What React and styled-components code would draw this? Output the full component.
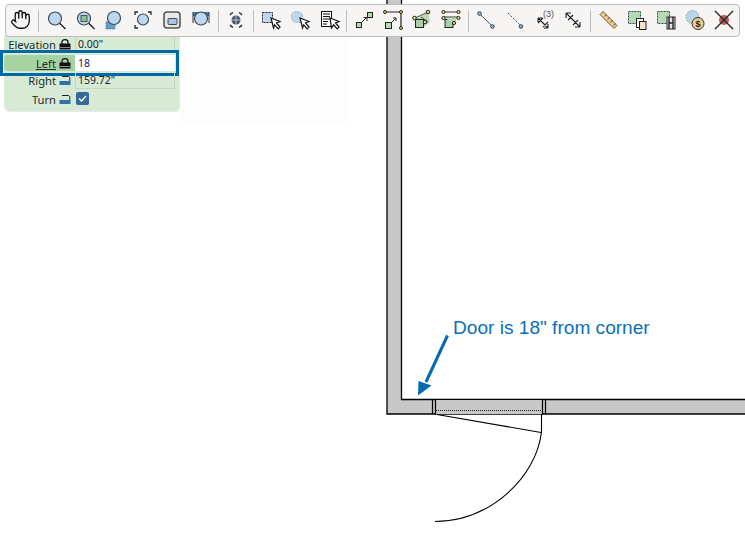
import React from 'react';
import styled, { createGlobalStyle } from 'styled-components';
import { Hand } from 'lucide-react';

const GlobalStyle = createGlobalStyle`
  html, body { margin: 0; padding: 0; background: #fff; }
  body { font-family: "Noto Sans", "Open Sans", sans-serif; }
`;

const Page = styled.div`
  position: relative;
  width: 745px;
  height: 555px;
  overflow: hidden;
  background: #fff;
`;

const Drawing = styled.svg`
  position: absolute;
  left: 0;
  top: 0;
`;

const Callout = styled.div`
  position: absolute;
  left: 453px;
  top: 317px;
  font-family: "Liberation Sans", Arial, sans-serif;
  font-size: 19.1px;
  line-height: 21px;
  color: #0b6fb8;
  white-space: nowrap;
`;

const Toolbar = styled.div`
  position: relative;
  z-index: 2;
  display: flex;
  align-items: center;
  box-sizing: border-box;
  width: 735px;
  height: 33px;
  margin: 4px 0 0 5px;
  background: #f6f5f3;
  border: 1px solid #bdbdbd;
  border-radius: 4px;
`;

const ToolButton = styled.div`
  flex: 0 0 29px;
  height: 29px;
  display: flex;
  align-items: center;
  justify-content: center;
  transform: translateY(-1px);
`;

const Separator = styled.div`
  flex: 0 0 6px;
  height: 22px;
  display: flex;
  justify-content: center;

  &::before {
    content: '';
    width: 1px;
    background: #bcbcbc;
  }
`;

const Panel = styled.div`
  position: relative;
  box-sizing: border-box;
  width: 175px;
  height: 76px;
  margin: -2px 0 0 4px;
  padding-right: 5px;
  background: #d6ead6;
  border-radius: 0 0 5px 5px;
  box-shadow: 1px 1px 1px #e4ece4;
`;

const Row = styled.div`
  position: relative;
  display: grid;
  grid-template-columns: 71px 100px;
  height: ${props => props.$height || 18}px;
`;

const LabelCell = styled.div`
  display: flex;
  align-items: center;
  justify-content: flex-end;
  gap: 3px;
  box-sizing: border-box;
  padding-right: 4px;
  font-size: 11.2px;
  color: #1f2a2a;
  background: ${props => (props.$active ? '#a6d3a1' : 'transparent')};
  border-radius: ${props => (props.$active ? '4px 0 0 4px' : '0')};
  margin-top: ${props => (props.$active ? '2px' : '0')};
  text-decoration: ${props => (props.$active ? 'underline' : 'none')};
`;

const ValueCell = styled.div`
  display: flex;
  align-items: center;
  box-sizing: border-box;
  padding-left: ${props => (props.$flush ? '0' : '2px')};
  font-size: 10.5px;
  color: #223;
  border: ${props => (props.$flush ? '0' : '1px')} solid ${props => (props.$plain ? 'transparent' : '#c2dac2')};
  border-top: none;
`;

const LeftInput = styled.input`
  box-sizing: border-box;
  width: 100%;
  height: 16px;
  margin-top: 2px;
  padding: 0 0 0 3px;
  border: none;
  outline: none;
  background: #fff;
  font-family: inherit;
  font-size: 10.5px;
  color: #1a1a50;
`;

const Highlight = styled.div`
  position: absolute;
  left: -4px;
  right: -5px;
  top: -3px;
  height: 26px;
  box-sizing: border-box;
  border: 3px solid #0068a6;
  pointer-events: none;
`;

const Check = styled.div`
  width: 13px;
  height: 13px;
  margin-left: -2px;
  border-radius: 2px;
  background: #37699a;
  display: flex;
  align-items: center;
  justify-content: center;
`;

const Ico = ({ children }) => (
  <svg width="24" height="24" viewBox="0 0 24 24" fill="none">{children}</svg>
);

const Lens = ({ x = 11, y = 10.5, r = 6.5 }) => (
  <>
    <circle cx={x} cy={y} r={r} fill="#bdd8ee" stroke="#3b4a55" strokeWidth="1.2" />
    <path d={`M${x + r * 0.72} ${y + r * 0.72}L${x + r + 4} ${y + r + 4}`} stroke="#222" strokeWidth="1.4" />
  </>
);

const Cursor = ({ x = 0 }) => (
  <path
    d={`M${12 + x} 10l9 3.500-3.500 1.500 3.500 4-1.800 1.800-3.500-4L14.500 20z`}
    fill="#fff"
    stroke="#111"
    strokeWidth="1.200"
  />
);

const Lock = ({ open }) => (
  <svg width="12" height="11" viewBox="0 0 12 11" fill="none">
    {open ? (
      <>
        <path d="M3 1.500H9C10.300 1.500 10.800 2.200 10.800 3.200V6" stroke="#222" strokeWidth="1" />
        <rect x="0.500" y="6" width="11" height="4" fill="#2f71a8" />
      </>
    ) : (
      <>
        <path d="M3 5V3C3 1.400 4.200 .7 6 .7S9 1.400 9 3V5" stroke="#111" strokeWidth="1.300" />
        <rect x="0.500" y="4.500" width="11" height="6" fill="#111" />
        <rect x="0.500" y="8" width="11" height="1" fill="#888" />
      </>
    )}
  </svg>
);

const icons = [
  <Hand key="hand" size={21} strokeWidth={1.5} color="#111" />,
  '|',
  <Ico key="z1"><Lens /></Ico>,
  <Ico key="z2"><Lens /><rect x="8" y="7.500" width="6" height="6" fill="#8cbf8e" stroke="#456" strokeWidth="1" /></Ico>,
  <Ico key="z3"><path d="M4 14h9v7H4z" fill="#6f9cc4" stroke="#4c7da8" strokeDasharray="1.5 1" /><Lens x="12" y="10" /></Ico>,
  <Ico key="z4"><path d="M4 7V4h3M17 4h3v3M4 17v3h3" stroke="#222" strokeWidth="1.3" /><Lens x="12" y="11.500" r="5.500" /></Ico>,
  <Ico key="z5"><rect x="4" y="4" width="16" height="16" rx="3" fill="#e8e8e8" stroke="#555" strokeWidth="1.6" /><rect x="8" y="10.500" width="9" height="6" rx="1" fill="#a5c6e2" stroke="#445" /></Ico>,
  <Ico key="z6"><path d="M4 4h16v4H4z" fill="#3f78a8" /><path d="M4 4v11M20 4v11" stroke="#333" /><Lens x="12" y="10.500" r="6.500" /></Ico>,
  '|',
  <Ico key="target">
    <circle cx="12" cy="12" r="4.500" fill="#44586a" />
    <path d="M12 6v12M6 12h12" stroke="#cfe0ee" strokeWidth="0.8" />
    <path d="M6 7c1-1.400 2-2 3-2.400M18 7c-1-1.400-2-2-3-2.400M6 17c1 1.400 2 2 3 2.400M18 17c-1 1.400-2 2-3 2.400" stroke="#222" strokeWidth="1.3" />
  </Ico>,
  '|',
  <Ico key="s1">
    <rect x="3.500" y="4.500" width="10" height="10" fill="#bcd7ee" stroke="#223" strokeDasharray="2 1" />
    <Cursor />
  </Ico>,
  <Ico key="s2">
    <ellipse cx="9" cy="9" rx="6" ry="5.500" fill="#bcd7ee" stroke="#a8b8c8" strokeDasharray="2 1" transform="rotate(30 9 9)" />
    <Cursor />
  </Ico>,
  <Ico key="s3">
    <rect x="4.500" y="3.500" width="10" height="15" fill="#fff" stroke="#111" />
    <path d="M6 6h7M6 8.500h7M6 11h7M6 13.500h5M6 16h4" stroke="#111" />
    <Cursor x={1} />
  </Ico>,
  '|',
  <Ico key="p1">
    <rect x="4.500" y="14.500" width="5" height="5" fill="#b5d8b5" stroke="#222" />
    <rect x="15.500" y="4.500" width="5" height="5" fill="#b5d8b5" stroke="#222" />
    <path d="M10 14l5-5M11.500 9.500H15V13" stroke="#222" />
  </Ico>,
  <Ico key="p2">
    <path d="M4 4h16v16" stroke="#222" strokeWidth="1.2" />
    <circle cx="4" cy="4" r="1.500" fill="#e8dc80" stroke="#222" />
    <circle cx="20" cy="4" r="1.500" fill="#e8dc80" stroke="#222" />
    <circle cx="20" cy="20" r="1.500" fill="#e8dc80" stroke="#222" />
    <rect x="4.500" y="14.500" width="6" height="6" fill="#b5d8b5" stroke="#222" />
    <path d="M11 14l4-4M12 10h3v3" stroke="#222" />
  </Ico>,
  <Ico key="p3">
    <path d="M5 10l13-6 2 10-6 5-8-1z" fill="#b5d8b5" />
    <path d="M5 10l13-6M11 9l7 5" stroke="#555" />
    <rect x="5.500" y="11.500" width="8" height="8" fill="#a8d0a8" stroke="#222" />
    <circle cx="18" cy="4" r="1.800" fill="#e8dc80" stroke="#222" />
    <circle cx="4.500" cy="10" r="1.800" fill="#e8dc80" stroke="#222" />
    <circle cx="15" cy="14" r="1.800" fill="#e8dc80" stroke="#222" />
  </Ico>,
  <Ico key="p4">
    <path d="M5 4h14M5 9h14" stroke="#777" strokeWidth="1.6" />
    <rect x="6" y="11.500" width="8" height="8" fill="#a8d0a8" stroke="#222" />
    <path d="M6 10l12 0-3 6z" fill="#b5d8b5" />
    <circle cx="4.500" cy="4" r="1.600" fill="#e8dc80" stroke="#222" />
    <circle cx="19.500" cy="4" r="1.600" fill="#e8dc80" stroke="#222" />
    <circle cx="4.500" cy="10" r="1.600" fill="#e8dc80" stroke="#222" />
    <circle cx="19.500" cy="10" r="1.600" fill="#e8dc80" stroke="#222" />
    <circle cx="15" cy="15" r="1.600" fill="#e8dc80" stroke="#222" />
  </Ico>,
  '|',
  <Ico key="m1">
    <path d="M6 6l12 12" stroke="#555" />
    <circle cx="5.500" cy="5.500" r="1.800" fill="#8fb8d8" stroke="#345" />
    <circle cx="18.500" cy="18.500" r="1.800" fill="#8fb8d8" stroke="#345" />
  </Ico>,
  <Ico key="m2">
    <path d="M5 5l12 12" stroke="#444" strokeDasharray="2 1.600" />
    <circle cx="18" cy="18.500" r="1.800" fill="#8fb8d8" stroke="#345" />
  </Ico>,
  <Ico key="m3">
    <path d="M6 10l10 10M6 10v4M6 10h4M16 20v-4M16 20h-4M11 10l-5 5M11 19l5-5" stroke="#222" strokeWidth="1.100" />
    <text x="11" y="9" fontFamily="Liberation Sans, sans-serif" fontSize="9" fill="#555">(3)</text>
  </Ico>,
  <Ico key="m4">
    <path d="M5 5l14 14M5 5v5M5 5h5M19 19v-5M19 19h-5M7 12l5-5M12 17l5-5" stroke="#222" strokeWidth="1.100" />
  </Ico>,
  '|',
  <Ico key="ruler">
    <path d="M7 3.500L21 17.500 18 20.500 4 6.500z" fill="#ecc98c" stroke="#6e5a36" />
    <path d="M8.500 8.500l2-2M11.500 11.500l2-2M14.500 14.500l2-2M17.500 17.500l2-2" stroke="#6e5a36" />
  </Ico>,
  <Ico key="c1">
    <rect x="3.500" y="3.500" width="12" height="12" fill="#b5d8b5" stroke="#254" strokeDasharray="2 1" />
    <rect x="11.500" y="10.500" width="7" height="9" fill="#fff" stroke="#222" />
    <rect x="14.500" y="13.500" width="6.500" height="8" fill="#f2e4c8" stroke="#222" />
  </Ico>,
  <Ico key="c2">
    <rect x="3.500" y="3.500" width="12" height="12" fill="#b5d8b5" stroke="#254" strokeDasharray="2 1" />
    <rect x="13" y="9" width="8" height="12" fill="#e4e4e4" stroke="#222" />
    <path d="M15 9v12M19 9v12M15 15h4" stroke="#222" strokeWidth="1.400" />
  </Ico>,
  <Ico key="c3">
    <circle cx="9.500" cy="9" r="6.500" fill="#b9d4ec" stroke="#8aa" strokeDasharray="2 1" />
    <circle cx="15" cy="15.500" r="6" fill="#eec98a" stroke="#333" />
    <text x="12.500" y="19" fontFamily="Liberation Sans, sans-serif" fontSize="9" fontWeight="700" fill="#222">$</text>
  </Ico>,
  <Ico key="x">
    <circle cx="12" cy="12" r="5" fill="#b5615a" />
    <path d="M3 3l18 18M21 3L3 21" stroke="#222" strokeWidth="1.300" />
  </Ico>,
];

const App = () => (
  <Page>
    <GlobalStyle />
    <Drawing width="745" height="555" viewBox="0 0 745 555" fill="none">
      <rect x="179" y="36" width="170" height="88" fill="#fdfdfd" />
      <path d="M387 0V414H745V400H401.500V0z" fill="#c8c8c8" />
      <path d="M387 0V414H745M401.500 0V399.500H745" stroke="#000" strokeWidth="1.300" />
      <rect x="436" y="400" width="106" height="14" fill="#c8c8c8" />
      <path d="M432.500 400V414M435.500 400V414M542.500 400V414M545.500 400V414" stroke="#000" strokeWidth="1.200" />
      <path d="M436 410.500H542" stroke="#222" strokeDasharray="1 1" />
      <path d="M437 414.500L541 432.500" stroke="#000" strokeWidth="1.100" />
      <path d="M541.500 414V432C536 478 490 521 435 521.500" stroke="#000" strokeWidth="1.100" />
      <path d="M447.500 335.500L426 382" stroke="#0569b3" strokeWidth="3" />
      <path d="M418 395.500L418.500 381 431.500 385.500z" fill="#0569b3" />
    </Drawing>
    <Callout>Door is 18" from corner</Callout>
    <Toolbar>
      {icons.map((icon, i) =>
        icon === '|' ? <Separator key={i} /> : <ToolButton key={i}>{icon}</ToolButton>
      )}
    </Toolbar>
    <Panel>
      <Row>
        <LabelCell>Elevation <Lock /></LabelCell>
        <ValueCell>0.00"</ValueCell>
      </Row>
      <Row>
        <LabelCell $active><span>Left</span> <Lock /></LabelCell>
        <ValueCell $plain $flush><LeftInput defaultValue="18" readOnly /></ValueCell>
        <Highlight />
      </Row>
      <Row>
        <LabelCell>Right <Lock open /></LabelCell>
        <ValueCell>159.72"</ValueCell>
      </Row>
      <Row $height={20}>
        <LabelCell>Turn <Lock open /></LabelCell>
        <ValueCell $plain>
          <Check>
            <svg width="9" height="9" viewBox="0 0 9 9" fill="none">
              <path d="M1 4.500L3.500 7 8 2" stroke="#fff" strokeWidth="1.400" />
            </svg>
          </Check>
        </ValueCell>
      </Row>
    </Panel>
  </Page>
);

export default App;
